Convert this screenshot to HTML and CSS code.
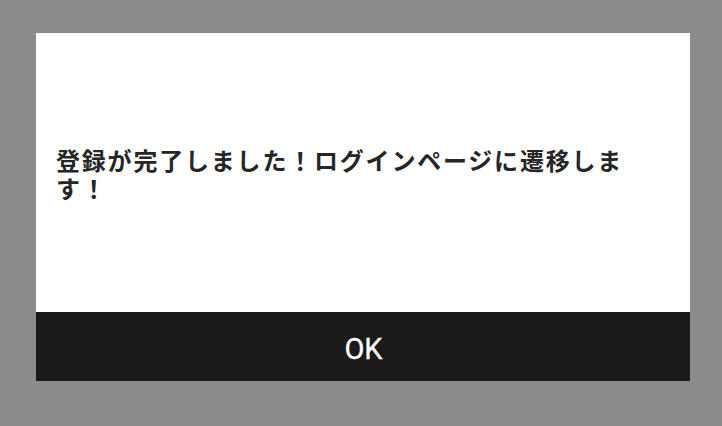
FILE: index.html
```html
<!DOCTYPE html>
<html lang="ja">
<head>
<meta charset="utf-8">
<title>登録完了</title>
<link rel="stylesheet" href="styles.css">
</head>
<body>
<div class="overlay">
  <div class="dialog">
    <div class="dialog-body">
      <p class="message">登録が完了しました！ログインページに遷移します！</p>
    </div>
    <button class="dialog-ok" type="button">OK</button>
  </div>
</div>
</body>
</html>
```
FILE: styles.css
```css
html, body {
  margin: 0;
  padding: 0;
  background: #8b8b8b;
}
.overlay {
  width: 722px;
  height: 426px;
  padding: 33px 0 0 36px;
  box-sizing: border-box;
}
.dialog {
  width: 654px;
  height: 348px;
  display: flex;
  flex-direction: column;
  background: #ffffff;
}
.dialog-body {
  flex: 1;
  display: flex;
  align-items: center;
  padding: 2px 48px 0 20px;
}
.message {
  margin: 0;
  font-family: "Noto Sans CJK JP", "Noto Sans", sans-serif;
  font-weight: 700;
  font-size: 24px;
  letter-spacing: 1.8px;
  line-height: 28px;
  color: #262626;
}
.dialog-ok {
  height: 69px;
  border: 0;
  margin: 0;
  padding: 5px 0 0 1px;
  background: #1a1a1a;
  color: #ffffff;
  font-family: Roboto, "Noto Sans", sans-serif;
  font-size: 29px;
  font-weight: 400;
  line-height: 64px;
  -webkit-text-stroke: 0.3px #ffffff;
}
```
